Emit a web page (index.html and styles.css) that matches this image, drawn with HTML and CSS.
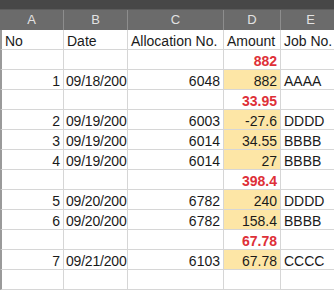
FILE: index.html
```html
<!DOCTYPE html>
<html>
<head>
<meta charset="utf-8">
<link rel="stylesheet" href="styles.css">
</head>
<body>
<div class="sheet">
  <div class="topband"></div>
  <div class="grid">
    <div class="ch">A</div><div class="ch">B</div><div class="ch">C</div><div class="ch">D</div><div class="ch">E</div>

    <div class="c first">No</div><div class="c">Date</div><div class="c">Allocation No.</div><div class="c">Amount</div><div class="c">Job No.</div>

    <div class="c first"></div><div class="c"></div><div class="c"></div><div class="c r red">882</div><div class="c"></div>
    <div class="c first r">1</div><div class="c d">09/18/200</div><div class="c r">6048</div><div class="c r hl">882</div><div class="c">AAAA</div>

    <div class="c first"></div><div class="c"></div><div class="c"></div><div class="c r red">33.95</div><div class="c"></div>
    <div class="c first r">2</div><div class="c d">09/19/200</div><div class="c r">6003</div><div class="c r hl">-27.6</div><div class="c">DDDD</div>
    <div class="c first r">3</div><div class="c d">09/19/200</div><div class="c r">6014</div><div class="c r hl">34.55</div><div class="c">BBBB</div>
    <div class="c first r">4</div><div class="c d">09/19/200</div><div class="c r">6014</div><div class="c r hl">27</div><div class="c">BBBB</div>

    <div class="c first"></div><div class="c"></div><div class="c"></div><div class="c r red">398.4</div><div class="c"></div>
    <div class="c first r">5</div><div class="c d">09/20/200</div><div class="c r">6782</div><div class="c r hl">240</div><div class="c">DDDD</div>
    <div class="c first r">6</div><div class="c d">09/20/200</div><div class="c r">6782</div><div class="c r hl">158.4</div><div class="c">BBBB</div>

    <div class="c first"></div><div class="c"></div><div class="c"></div><div class="c r red">67.78</div><div class="c"></div>
    <div class="c first r">7</div><div class="c d">09/21/200</div><div class="c r">6103</div><div class="c r hl">67.78</div><div class="c">CCCC</div>

    <div class="c first"></div><div class="c"></div><div class="c"></div><div class="c"></div><div class="c"></div>
  </div>
</div>
</body>
</html>
```
FILE: styles.css
```css
html, body {
  margin: 0;
  padding: 0;
  background: #ffffff;
  overflow: hidden;
}
.sheet {
  width: 334px;
  height: 291px;
  overflow: hidden;
  font-family: "Liberation Sans", Arial, sans-serif;
  font-size: 14px;
  color: #1a1a1a;
}
.topband {
  height: 10px;
  background: #474747;
  border-bottom: 1px solid #5c5c5c;
  box-sizing: border-box;
}
.grid {
  display: grid;
  grid-template-columns: 64px 64px 96px 57px 60px;
  grid-auto-rows: 20px;
}
.ch {
  background: #6b6b6b;
  color: #e2e2e2;
  font-size: 13px;
  text-align: center;
  line-height: 20px;
  border-right: 1px solid #8d8d8d;
  box-sizing: border-box;
}
.c {
  border-right: 1px solid #d6d6d6;
  border-bottom: 1px solid #d6d6d6;
  box-sizing: border-box;
  padding: 0 2px 0 3px;
  line-height: 22px;
  white-space: nowrap;
  overflow: hidden;
}
.first {
  border-left: 2px solid #9a9a9a;
}
.d {
  padding: 0 0 0 2px;
  letter-spacing: -0.2px;
}
.r {
  text-align: right;
  padding: 0 3px 0 2px;
}
.red {
  color: #de3038;
  font-weight: bold;
}
.hl {
  background: #fde6a6;
}
```
